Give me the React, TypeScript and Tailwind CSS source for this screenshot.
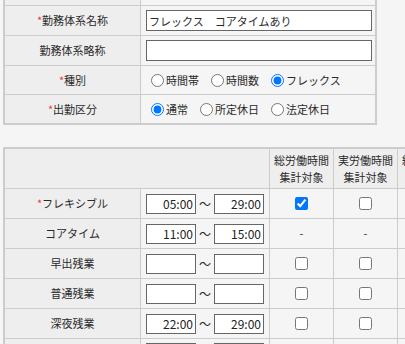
import React from 'react';

const cellBorder = 'border-[#cccccc]';

function Req() {
  return <span className="text-[#e8383d]">*</span>;
}

function Label({ children, className = '' }: { children?: React.ReactNode; className?: string }) {
  return (
    <div className={`flex items-center justify-center bg-[#eeeeee] border-r ${cellBorder} ${className}`}>
      {children}
    </div>
  );
}

function Radio({ name, text, checked }: { name: string; text: string; checked?: boolean }) {
  return (
    <label className="flex items-center mr-[12px]">
      <input type="radio" name={name} defaultChecked={checked} className="m-0 w-[13px] h-[13px]" />
      <span className="ml-[2px]">{text}</span>
    </label>
  );
}

function TimeInput({ value = '' }: { value?: string }) {
  return (
    <input
      type="text"
      defaultValue={value}
      className="w-[50px] h-[20px] border border-[#666666] bg-white text-right pr-[2px] text-[12px] text-[#222222] outline-none"
    />
  );
}

type Row = {
  label: string;
  required?: boolean;
  from?: string;
  to?: string;
  checks: (boolean | null)[];
};

const rows: Row[] = [
  { label: 'フレキシブル', required: true, from: '05:00', to: '29:00', checks: [true, false] },
  { label: 'コアタイム', from: '11:00', to: '15:00', checks: [null, null] },
  { label: '早出残業', checks: [false, false] },
  { label: '普通残業', checks: [false, false] },
  { label: '深夜残業', from: '22:00', to: '29:00', checks: [false, false] },
];

const grid2 = 'grid grid-cols-[136px_129px_64px_64px_64px]';

export default function App() {
  return (
    <div className="w-[405px] h-[344px] overflow-hidden bg-[#f5f5f5] text-[11px] text-[#2a2a2a] font-['Noto_Sans_CJK_JP','Noto_Sans',sans-serif]">
      {/* basic settings */}
      <div className={`ml-[3px] w-[374px] border-2 border-t-0 ${cellBorder}`}>
        <div className={`grid grid-cols-[136px_1fr] h-[6px] border-b ${cellBorder}`}>
          <Label />
          <div />
        </div>
        <div className={`grid grid-cols-[136px_1fr] h-[30px] border-b ${cellBorder}`}>
          <Label><Req />勤務体系名称</Label>
          <div className="flex items-center pl-[5px]">
            <input
              type="text"
              defaultValue="フレックス　コアタイムあり"
              className="w-[226px] h-[21px] border border-[#666666] bg-white px-[2px] text-[11px] outline-none"
            />
          </div>
        </div>
        <div className={`grid grid-cols-[136px_1fr] h-[30px] border-b ${cellBorder}`}>
          <Label>勤務体系略称</Label>
          <div className="flex items-center pl-[5px]">
            <input
              type="text"
              className="w-[226px] h-[21px] border border-[#666666] bg-white px-[2px] outline-none"
            />
          </div>
        </div>
        <div className={`grid grid-cols-[136px_1fr] h-[29px] border-b ${cellBorder}`}>
          <Label><Req />種別</Label>
          <div className="flex items-center pl-[10px]">
            <Radio name="kind" text="時間帯" />
            <Radio name="kind" text="時間数" />
            <Radio name="kind" text="フレックス" checked />
          </div>
        </div>
        <div className="grid grid-cols-[136px_1fr] h-[28px]">
          <Label><Req />出勤区分</Label>
          <div className="flex items-center pl-[10px]">
            <Radio name="day" text="通常" checked />
            <Radio name="day" text="所定休日" />
            <Radio name="day" text="法定休日" />
          </div>
        </div>
      </div>

      {/* time ranges */}
      <div className={`mt-[22px] ml-[3px] w-max border-l-2 border-t-2 ${cellBorder}`}>
        <div className={`${grid2} h-[40px] border-b ${cellBorder}`}>
          <div className={`col-span-2 bg-[#eeeeee] border-r ${cellBorder}`} />
          {['総労働時間', '実労働時間', '総拘束時間'].map((h) => (
            <div
              key={h}
              className={`flex flex-col items-center justify-center bg-[#eeeeee] border-r ${cellBorder} leading-[17px]`}
            >
              <span>{h}</span>
              <span>集計対象</span>
            </div>
          ))}
        </div>
        {rows.map((r) => (
          <div key={r.label} className={`${grid2} h-[30px] border-b ${cellBorder}`}>
            <Label>
              {r.required && <Req />}
              {r.label}
            </Label>
            <div className={`flex items-center pl-[5px] border-r ${cellBorder}`}>
              <TimeInput value={r.from} />
              <span className="w-[18px] text-center text-[12px]">～</span>
              <TimeInput value={r.to} />
            </div>
            {r.checks.map((c, i) => (
              <div key={i} className={`flex items-center justify-center border-r ${cellBorder}`}>
                {c === null ? (
                  <span>-</span>
                ) : (
                  <input type="checkbox" defaultChecked={c} className="m-0 w-[13px] h-[13px]" />
                )}
              </div>
            ))}
            <div className={`border-r ${cellBorder}`} />
          </div>
        ))}
        <div className={`${grid2} h-[30px]`}>
          <Label />
          <div className={`flex items-start pt-[4px] pl-[5px] border-r ${cellBorder}`}>
            <TimeInput />
            <span className="w-[18px]" />
            <TimeInput />
          </div>
          <div className={`border-r ${cellBorder}`} />
          <div className={`border-r ${cellBorder}`} />
          <div className={`border-r ${cellBorder}`} />
        </div>
      </div>
    </div>
  );
}
